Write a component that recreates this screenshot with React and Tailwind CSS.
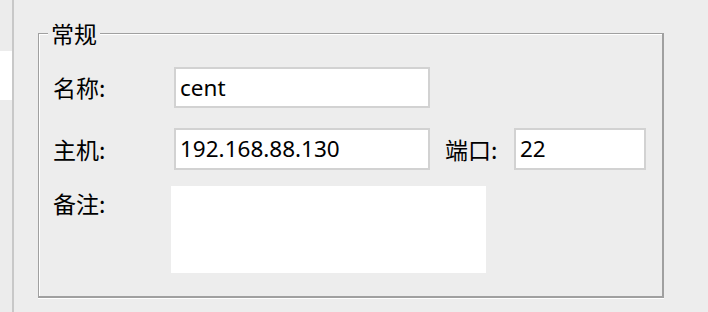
export default function App() {
  const cjk = { fontFamily: '"Noto Sans CJK SC", "Noto Sans", sans-serif' };
  const lat = { fontFamily: '"Noto Sans", "Noto Sans CJK SC", sans-serif' };
  return (
    <div className="w-[708px] h-[312px] bg-[#ededed] flex overflow-hidden text-black">
      <div className="w-[14px] h-full flex flex-col border-r-2 border-[#c8c8c8]">
        <div className="h-[51px] bg-[#ececec]" />
        <div className="h-[49px] bg-white" />
        <div className="flex-1 bg-[#ececec]" />
      </div>
      <div className="pt-[33px] pl-[24px]">
        <div className="relative w-[626px] h-[265px] border-t border-l border-r-2 border-b-2 border-[#a0a0a0] shadow-[0_1px_0_#ffffff]">
          <div className="absolute left-[9px] -top-[13px] px-[3px] bg-[#ededed] text-[23px] leading-[24px]" style={cjk}>
            常规
          </div>
          <div className="w-full h-full border-t border-l border-white pl-[13px] pt-[32px] flex flex-col">
            <div className="flex items-center h-[41px]">
              <div className="w-[121px] text-[23px]" style={cjk}>名称:</div>
              <div className="w-[256px] h-[41px] bg-white border-2 border-[#d2d2d2] flex items-center pl-[4px] text-[22.5px]" style={lat}>
                cent
              </div>
            </div>
            <div className="flex items-center h-[42px] mt-[20px]">
              <div className="w-[121px] text-[23px]" style={cjk}>主机:</div>
              <div className="w-[256px] h-[42px] bg-white border-2 border-[#d2d2d2] flex items-center pl-[4px] text-[22.5px]" style={lat}>
                192.168.88.130
              </div>
              <div className="w-[84px] pl-[15px] text-[23px]" style={cjk}>端口:</div>
              <div className="w-[132px] h-[42px] bg-white border-2 border-[#d2d2d2] flex items-center pl-[4px] text-[22.5px]" style={lat}>
                22
              </div>
            </div>
            <div className="flex mt-[16px]">
              <div className="w-[118px] text-[23px] leading-[32px] pt-[1px]" style={cjk}>备注:</div>
              <div className="w-[315px] h-[87px] bg-white" />
            </div>
          </div>
        </div>
      </div>
    </div>
  );
}
